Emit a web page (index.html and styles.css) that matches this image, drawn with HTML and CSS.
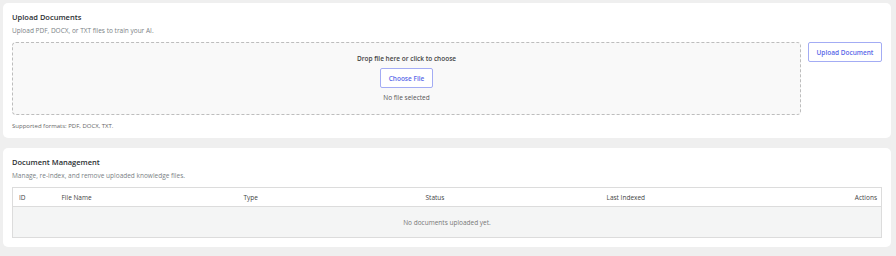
FILE: index.html
```html
<!DOCTYPE html>
<html>
<head>
    <title>Knowledge Base</title>
    <link rel="stylesheet" href="styles.css">
</head>
<body>
    <div class="page">
        <section class="card">
            <h2 class="card-title">Upload Documents</h2>
            <p class="card-sub">Upload PDF, DOCX, or TXT files to train your AI.</p>

            <div class="upload-row">
                <div class="dropzone">
                    <p class="drop-text">Drop file here or click to choose</p>
                    <button class="btn btn-outline" type="button">Choose File</button>
                    <p class="file-name">No file selected</p>
                </div>
                <button class="btn btn-outline btn-upload" type="button">Upload Document</button>
            </div>

            <p class="hint">Supported formats: PDF, DOCX, TXT.</p>
        </section>

        <section class="card">
            <h2 class="card-title">Document Management</h2>
            <p class="card-sub">Manage, re-index, and remove uploaded knowledge files.</p>

            <table class="doc-table">
                <colgroup>
                    <col class="col-id">
                    <col class="col-name">
                    <col class="col-type">
                    <col class="col-status">
                    <col>
                    <col class="col-actions">
                </colgroup>
                <thead>
                    <tr>
                        <th>ID</th>
                        <th>File Name</th>
                        <th>Type</th>
                        <th>Status</th>
                        <th>Last Indexed</th>
                        <th class="right">Actions</th>
                    </tr>
                </thead>
                <tbody>
                    <tr>
                        <td colspan="6" class="empty">No documents uploaded yet.</td>
                    </tr>
                </tbody>
            </table>
        </section>
    </div>
</body>
</html>
```

FILE: styles.css
```css
body {
    margin: 0;
    background-color: #efefef;
    font-family: "Open Sans", "Liberation Sans", sans-serif;
    color: #333;
}

.page {
    display: flex;
    flex-direction: column;
    gap: 10px;
    padding: 3px 5px 0 3px;
}

.card {
    background-color: #fff;
    border-radius: 5px;
    padding: 9px 9px 7px 9px;
}

.card + .card {
    padding-bottom: 8px;
}

.card-title {
    margin: 0;
    font-size: 7.5px;
    line-height: 10px;
    font-weight: 600;
    color: #2b2f33;
}

.card-sub {
    margin: 4px 0 0 0;
    font-size: 6.5px;
    line-height: 10px;
    color: #7a7f85;
}

.upload-row {
    display: flex;
    align-items: flex-start;
    gap: 7px;
    margin-top: 6px;
}

.dropzone {
    flex: 1;
    display: flex;
    flex-direction: column;
    align-items: center;
    height: 73px;
    box-sizing: border-box;
    padding-top: 11px;
    border: 1px dashed #bdbdbd;
    border-radius: 4px;
    background-color: #f9f9f9;
}

.drop-text {
    margin: 0;
    font-size: 6.5px;
    line-height: 10px;
    font-weight: 600;
    color: #444;
}

.file-name {
    margin: 5px 0 0 0;
    font-size: 6.5px;
    line-height: 10px;
    color: #555;
}

.btn {
    font-family: inherit;
    font-size: 6.5px;
    font-weight: 600;
    white-space: nowrap;
    cursor: pointer;
}

.btn-outline {
    height: 20px;
    padding: 0;
    background-color: #fff;
    color: #5a68e8;
    border: 1px solid #a3acf4;
    border-radius: 2px;
}

.dropzone .btn-outline {
    margin-top: 4px;
    width: 53px;
}

.btn-upload {
    width: 74px;
}

.hint {
    margin: 6px 0 0 0;
    font-size: 6px;
    line-height: 10px;
    color: #666;
}

.doc-table {
    width: 100%;
    margin-top: 6px;
    margin-bottom: 1px;
    border-collapse: collapse;
    border: 1px solid #dcdcdc;
    font-size: 6.5px;
    table-layout: fixed;
}

.col-id { width: 43px; }
.col-name { width: 182px; }
.col-type { width: 182px; }
.col-status { width: 181px; }
.col-actions { width: 80px; }

.doc-table th {
    height: 18px;
    padding: 0 6px;
    text-align: left;
    font-weight: normal;
    color: #444;
    border-bottom: 1px solid #dcdcdc;
}

.doc-table th.right {
    text-align: right;
    padding-right: 4px;
}

.doc-table td.empty {
    height: 30px;
    padding: 0;
    text-align: center;
    color: #777;
    background-color: #f4f5f5;
}
```
